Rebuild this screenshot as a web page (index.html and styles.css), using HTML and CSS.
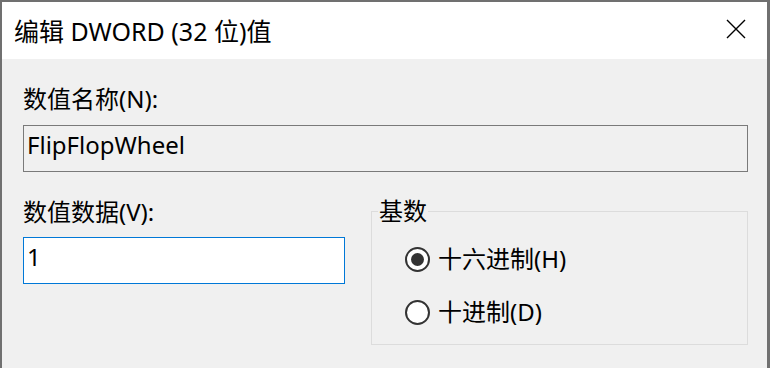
FILE: index.html
```html
<!DOCTYPE html>
<html lang="zh-CN">
<head>
<meta charset="utf-8">
<title>编辑 DWORD (32 位)值</title>
<link rel="stylesheet" href="styles.css">
</head>
<body>
<div class="window">
  <div class="titlebar">
    <div class="title">编辑 DWORD (32 位)值</div>
    <svg class="close" width="20" height="20" viewBox="0 0 20 20" aria-label="关闭">
      <path d="M1 1 L19 19 M19 1 L1 19" stroke="#000" stroke-width="1.4" fill="none"/>
    </svg>
  </div>
  <div class="content">
    <div class="label name-label">数值名称(N):</div>
    <div class="field field-readonly">FlipFlopWheel</div>
    <div class="lower">
      <div class="data-col">
        <div class="label">数值数据(V):</div>
        <div class="field field-active">1</div>
      </div>
      <fieldset class="group">
        <legend class="group-legend">基数</legend>
        <div class="radio-row">
          <span class="radio checked"></span>
          <span class="radio-text">十六进制(H)</span>
        </div>
        <div class="radio-row">
          <span class="radio"></span>
          <span class="radio-text">十进制(D)</span>
        </div>
      </fieldset>
    </div>
  </div>
</div>
</body>
</html>
```
FILE: styles.css
```css
html, body {
  margin: 0;
  padding: 0;
  background: #f0f0f0;
  overflow: hidden;
}

body {
  font-family: "Noto Sans", "Noto Sans CJK SC", sans-serif;
  color: #000;
}

.window {
  width: 765px;
  height: 366px;
  border-top: 2px solid #707070;
  border-left: 2px solid #707070;
  border-right: 3px solid #707070;
  background: #f0f0f0;
}

.titlebar {
  height: 57px;
  background: #fff;
  display: flex;
  align-items: center;
  justify-content: space-between;
  padding-left: 12px;
  padding-right: 21px;
}

.title {
  font-size: 25px;
  line-height: 30px;
}

.close {
  display: block;
  margin-top: -3px;
}

.content {
  padding: 0 19px 0 21px;
}

.label {
  font-size: 24px;
  line-height: 30px;
}

.name-label {
  padding-top: 25px;
}

.field {
  box-sizing: border-box;
  height: 47px;
  font-size: 24px;
  line-height: 30px;
  padding: 4px 3px 11px 3px;
  border: 1px solid #7a7a7a;
}

.field-readonly {
  margin-top: 11px;
  width: 725px;
  background: #f0f0f0;
}

.field-active {
  margin-top: 10px;
  width: 322px;
  background: #fff;
  border-color: #0078d7;
}

.lower {
  display: flex;
  align-items: flex-start;
  margin-top: 25px;
}

.data-col {
  width: 322px;
}

.group {
  box-sizing: border-box;
  width: 377px;
  height: 149px;
  margin: -1px 0 0 26px;
  padding: 18px 0 0 0;
  border: 1px solid #dcdcdc;
  min-width: 0;
}

.group-legend {
  font-size: 24px;
  line-height: 30px;
  padding: 0 1px;
  margin-left: 6px;
}

.radio-row {
  display: flex;
  align-items: center;
  height: 30px;
  margin-left: 33px;
  font-size: 24px;
  line-height: 30px;
}

.radio-row + .radio-row {
  margin-top: 23px;
}

.radio {
  box-sizing: border-box;
  width: 25px;
  height: 25px;
  border: 2px solid #333;
  border-radius: 50%;
  background: #fff;
  display: flex;
  align-items: center;
  justify-content: center;
  margin-right: 8px;
  flex: none;
}

.radio.checked::after {
  content: "";
  width: 13px;
  height: 13px;
  border-radius: 50%;
  background: #333;
}
```
